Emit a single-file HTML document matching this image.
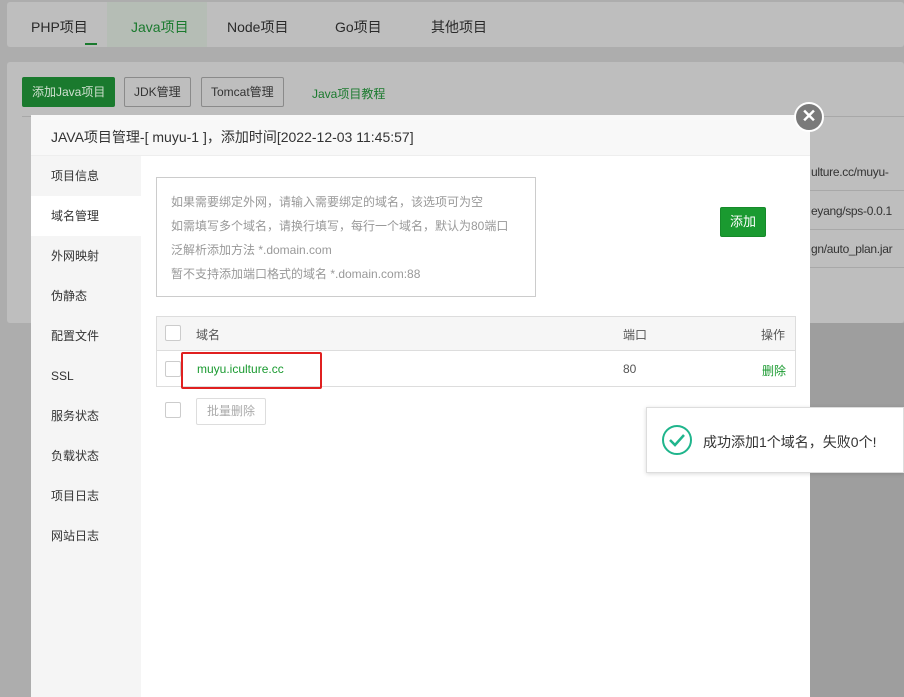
<!DOCTYPE html><html><head><meta charset="utf-8"><style>
*{margin:0;padding:0;box-sizing:border-box}
body{width:904px;height:697px;overflow:hidden;background:#adadad;font-family:"Liberation Sans","Noto Sans CJK SC",sans-serif;font-size:13px;color:#333;position:relative}
.abs{position:absolute}
.nav{left:7px;top:2px;width:897px;height:45px;background:#bebebe;border-radius:3px}
.nav span{position:absolute;top:15px;font-size:14px;color:#2a2a2a}
.card{left:7px;top:62px;width:897px;height:261px;background:#bebebe;border-radius:3px}
.btn{position:absolute;top:77px;height:30px;line-height:28px;border:1px solid #8a8a8a;border-radius:2px;padding:0 9px;font-size:12px;color:#333;background:#bebebe}
.modal{left:31px;top:115px;width:779px;height:582px;background:#fff}
.mh{left:0;top:0;width:779px;height:41px;background:#f8f8f8;border-bottom:1px solid #eee;font-size:14px;padding:12px 0 0 20px;color:#333}
.menu{left:0;top:41px;width:110px;height:541px;background:#f5f5f5}
.menu div{height:40px;line-height:40px;padding-left:20px;font-size:12px;color:#333}
.menu .on{background:#fff}
.ta{left:125px;top:62px;width:380px;height:120px;border:1px solid #ccc;padding:12px 0 0 14px;font-size:12px;color:#999;line-height:24px}
.cb{position:absolute;width:16px;height:16px;border:1px solid #ccc;background:#fff;border-radius:2px}
.rt{position:absolute;left:811px;font-size:12px;color:#333;letter-spacing:-0.3px;white-space:nowrap}
</style></head><body>
<div class="abs nav">
<div class="abs" style="left:100px;top:0;width:100px;height:45px;background:#b5bdb5"></div>
<span style="left:24px">PHP项目</span><span style="left:124px;color:#1a7a2e">Java项目</span><span style="left:220px">Node项目</span><span style="left:328px">Go项目</span><span style="left:424px">其他项目</span>
</div>
<div class="abs" style="left:85px;top:43px;width:12px;height:2px;background:#1a7a2e"></div>
<div class="abs card"></div>
<div class="btn" style="left:22px;background:#1a7a2e;border-color:#1a7a2e;color:#cfe0cf">添加Java项目</div>
<div class="btn" style="left:124px">JDK管理</div>
<div class="btn" style="left:201px">Tomcat管理</div>
<div class="abs" style="left:312px;top:85px;font-size:12px;color:#1a7a2e">Java项目教程</div>
<div class="abs" style="left:22px;top:116px;width:882px;height:1px;background:#a8a8a8"></div>
<div class="abs" style="left:810px;top:190px;width:94px;height:1px;background:#a8a8a8"></div>
<div class="abs" style="left:810px;top:229px;width:94px;height:1px;background:#a8a8a8"></div>
<div class="abs" style="left:810px;top:267px;width:94px;height:1px;background:#a8a8a8"></div>
<div class="rt" style="top:165px">ulture.cc/muyu-</div>
<div class="rt" style="top:204px">eyang/sps-0.0.1</div>
<div class="rt" style="top:242px">gn/auto_plan.jar</div>
<div class="abs modal">
<div class="abs mh">JAVA项目管理-[ muyu-1 ]，添加时间[2022-12-03 11:45:57]</div>
<div class="abs menu"><div>项目信息</div><div class="on">域名管理</div><div>外网映射</div><div>伪静态</div><div>配置文件</div><div>SSL</div><div>服务状态</div><div>负载状态</div><div>项目日志</div><div>网站日志</div></div>
<div class="abs ta">如果需要绑定外网，请输入需要绑定的域名，该选项可为空<br>如需填写多个域名，请换行填写，每行一个域名，默认为80端口<br>泛解析添加方法 *.domain.com<br>暂不支持添加端口格式的域名 *.domain.com:88</div>
<div class="abs" style="left:689px;top:92px;width:46px;height:30px;background:#1a9a30;border:1px solid #168a2a;border-radius:2px;color:#fff;font-size:13px;text-align:center;line-height:28px">添加</div>
<div class="abs" style="left:125px;top:201px;width:640px;height:71px;border:1px solid #ddd"></div>
<div class="abs" style="left:126px;top:202px;width:638px;height:34px;background:#f6f6f6;border-bottom:1px solid #ddd"></div>
<div class="cb" style="left:134px;top:210px"></div>
<div class="abs" style="left:165px;top:211px;font-size:12px;color:#555">域名</div>
<div class="abs" style="left:592px;top:211px;font-size:12px;color:#555">端口</div>
<div class="abs" style="left:730px;top:211px;font-size:12px;color:#555">操作</div>
<div class="cb" style="left:134px;top:246px"></div>
<div class="abs" style="left:166px;top:247px;font-size:12px;color:#1a9a30">muyu.iculture.cc</div>
<div class="abs" style="left:592px;top:247px;font-size:12px;color:#555">80</div>
<div class="abs" style="left:731px;top:247px;font-size:12px;color:#1a9a30">删除</div>
<div class="abs" style="left:150px;top:237px;width:141px;height:37px;border:2px solid #e02020;border-radius:2px"></div>
<div class="cb" style="left:134px;top:287px"></div>
<div class="abs" style="left:165px;top:283px;width:70px;height:27px;border:1px solid #ddd;border-radius:2px;font-size:12px;color:#aaa;text-align:center;line-height:25px">批量删除</div>
</div>
<div class="abs" style="left:810px;top:323px;width:94px;height:374px;background:#9e9e9e"></div>
<div class="abs" style="left:646px;top:407px;width:258px;height:66px;background:#fff;border:1px solid #ddd;box-shadow:0 1px 4px rgba(0,0,0,.15)">
<svg class="abs" style="left:14px;top:16px" width="32" height="32" viewBox="0 0 32 32"><circle cx="16" cy="16" r="14" fill="none" stroke="#1fb58c" stroke-width="2"/><path d="M9 16l5 5 9-10" fill="none" stroke="#1fb58c" stroke-width="2.5"/></svg>
<div class="abs" style="left:56px;top:24px;font-size:14px;color:#333">成功添加1个域名，失败0个!</div>
</div>
<div class="abs" style="left:794px;top:102px;width:30px;height:30px;border-radius:50%;background:#7a7a7a;border:2px solid #fff;color:#fff;font-size:18px;text-align:center;line-height:25px;font-weight:bold">✕</div>
</body></html>
